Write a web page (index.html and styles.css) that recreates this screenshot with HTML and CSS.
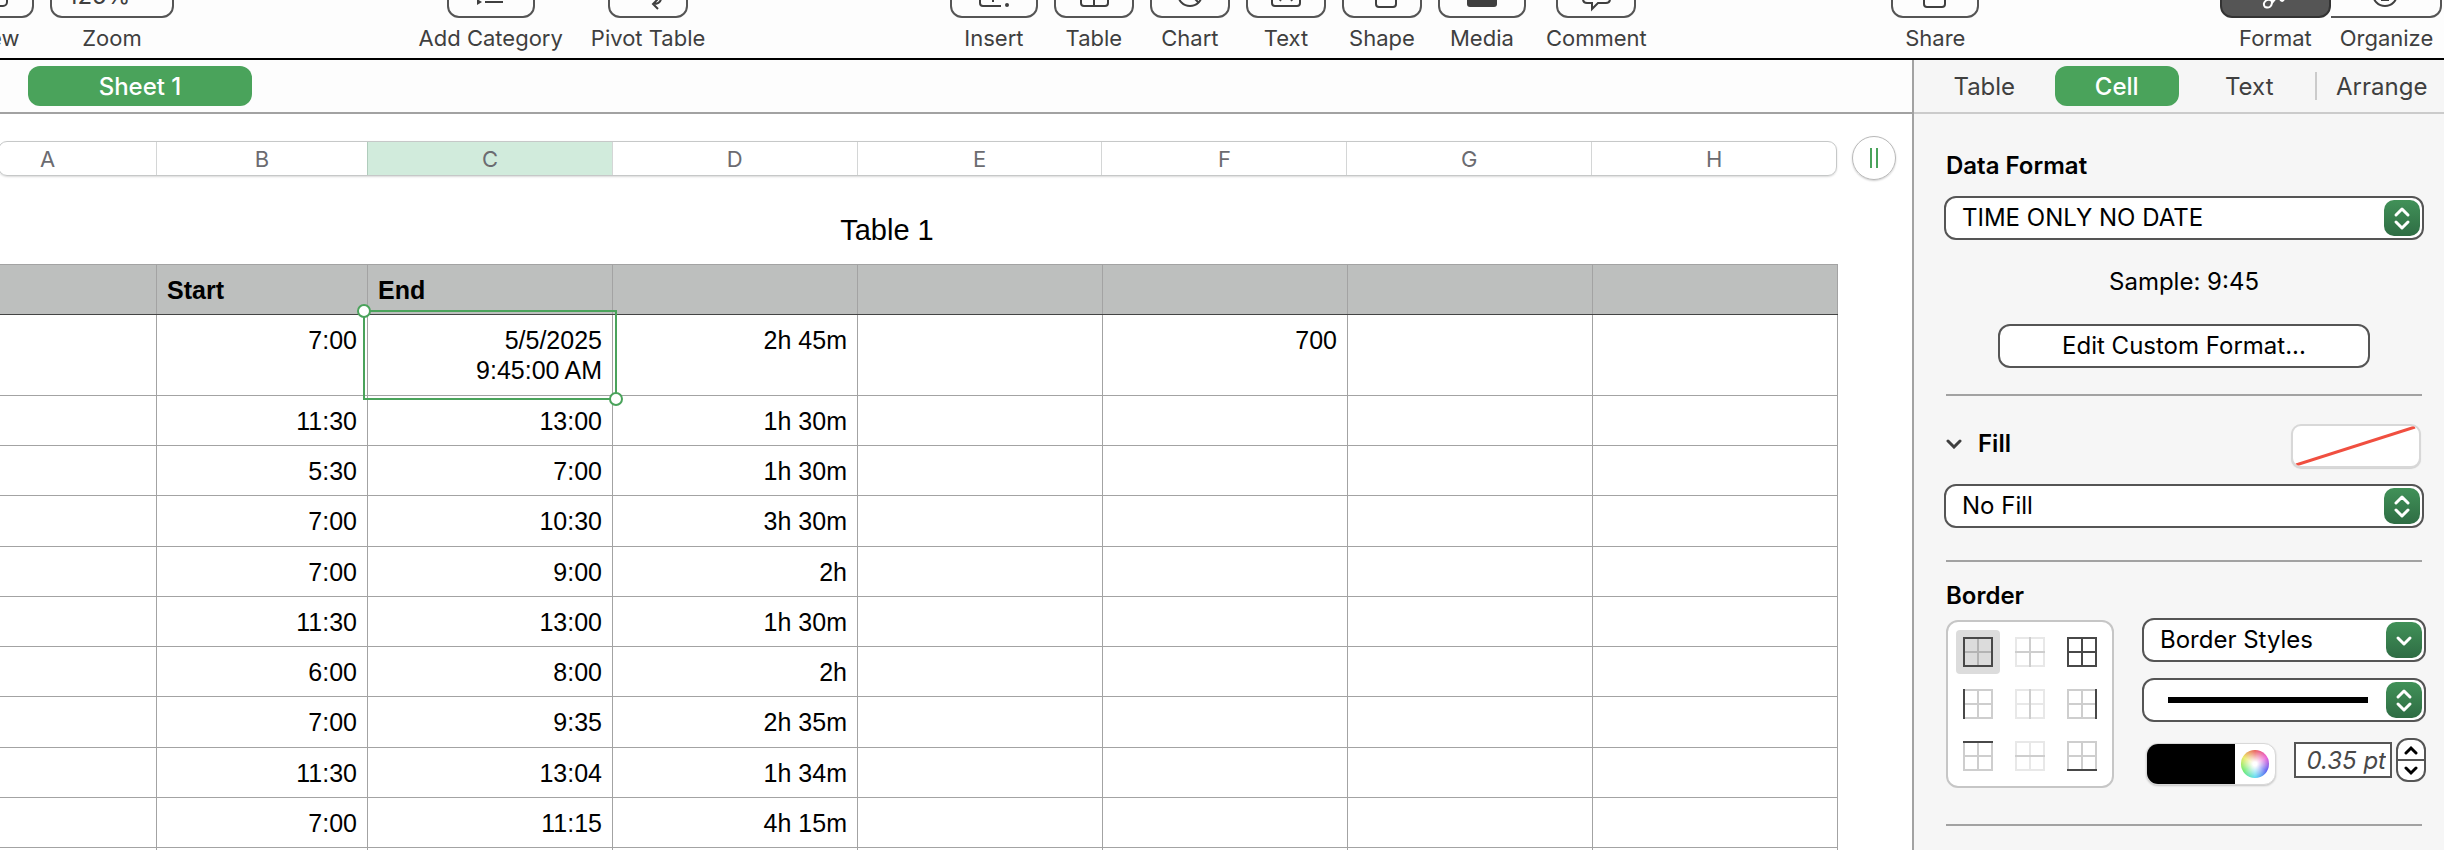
FILE: index.html
```html
<!DOCTYPE html>
<html lang="en">
<head>
    <meta charset="UTF-8">
    <title>Table 1 - Sheet 1</title>
    <link rel="stylesheet" href="styles.css">
</head>
<body>
    <header class="toolbar">
        <div class="tool-group left">
            <button class="tool" type="button">
                <span class="face">
                    <svg viewBox="0 0 40 40"><rect x="3" y="9" width="30" height="21" rx="4"/></svg>
                </span>
                <span class="tool-label">View</span>
            </button>
            <button class="tool" type="button">
                <span class="face zoom-face">125%
                    <svg class="zoom-arrow" viewBox="0 0 14 14"><path d="M2 4l5 5 5-5"/></svg>
                </span>
                <span class="tool-label">Zoom</span>
            </button>
        </div>
        <div class="tool-group wide">
            <button class="tool" type="button">
                <span class="face medium">
                    <svg viewBox="0 0 40 40"><path d="M14 10h18M14 18h18M14 26h18"/><path class="solid" d="M6 23l5 3-5 3z"/></svg>
                </span>
                <span class="tool-label">Add Category</span>
            </button>
            <button class="tool" type="button">
                <span class="face">
                    <svg viewBox="0 0 40 40"><path d="M33 15v8q0 6-8 6M30 24l-5 5 5 5" transform="translate(0 -1)"/><rect x="5" y="4" width="18" height="14" rx="3"/></svg>
                </span>
                <span class="tool-label">Pivot Table</span>
            </button>
        </div>
        <div class="tool-group">
            <button class="tool" type="button">
                <span class="face medium">
                    <svg viewBox="0 0 40 40"><path d="M6 8v19q0 3 3 3h18M19 20v6M33 8v16"/><circle class="solid" cx="33" cy="29" r="2"/></svg>
                </span>
                <span class="tool-label">Insert</span>
            </button>
            <button class="tool" type="button">
                <span class="face">
                    <svg viewBox="0 0 40 40"><rect x="7" y="8" width="27" height="22" rx="3"/><path d="M20 8v22M7 16h27"/></svg>
                </span>
                <span class="tool-label">Table</span>
            </button>
            <button class="tool" type="button">
                <span class="face">
                    <svg viewBox="0 0 40 40"><circle cx="20" cy="18" r="12"/><path d="M20 6v12l9 9"/></svg>
                </span>
                <span class="tool-label">Chart</span>
            </button>
            <button class="tool" type="button">
                <span class="face">
                    <svg viewBox="0 0 40 40"><rect x="6" y="7" width="28" height="23" rx="3"/><path d="M14 25l6-13 6 13"/></svg>
                </span>
                <span class="tool-label">Text</span>
            </button>
            <button class="tool" type="button">
                <span class="face">
                    <svg viewBox="0 0 40 40"><path d="M14 13h20v15q0 3-3 3H17q-3 0-3-3z"/><path d="M14 22q-7-2-7-8t7-8"/></svg>
                </span>
                <span class="tool-label">Shape</span>
            </button>
            <button class="tool" type="button">
                <span class="face medium">
                    <svg viewBox="0 0 40 40"><rect class="solid" x="5" y="8" width="30" height="23" rx="3"/></svg>
                </span>
                <span class="tool-label">Media</span>
            </button>
            <button class="tool" type="button">
                <span class="face">
                    <svg viewBox="0 0 40 40"><path d="M11 6h19q4 0 4 4v13q0 4-4 4h-8l-6 6v-6h-5q-4 0-4-4V10q0-4 4-4z"/></svg>
                </span>
                <span class="tool-label">Comment</span>
            </button>
        </div>
        <div class="tool-group">
            <button class="tool" type="button">
                <span class="face medium">
                    <svg viewBox="0 0 40 40"><path d="M14 12h-2q-3 0-3 3v13q0 3 3 3h15q3 0 3-3V15q0-3-3-3h-2"/></svg>
                </span>
                <span class="tool-label">Share</span>
            </button>
        </div>
        <div class="segmented">
            <button class="tool" type="button" aria-pressed="true">
                <span class="face pressed">
                    <svg viewBox="0 0 40 40"><path d="M10 31q-3-4 2-7 5-1 5 3-1 6-7 4zM17 26l9-12 6-2-2 8q-2 8-5 3l-4-1-4 5"/></svg>
                </span>
                <span class="tool-label">Format</span>
            </button>
            <button class="tool" type="button" aria-pressed="false">
                <span class="face last">
                    <svg viewBox="0 0 40 40"><circle cx="20" cy="18" r="12"/><path d="M13 12h14M14 18h12M16 24h8"/></svg>
                </span>
                <span class="tool-label">Organize</span>
            </button>
        </div>
    </header>

    <div class="workspace">
        <main class="canvas">
            <nav class="sheet-bar">
                <button class="sheet-tab" type="button">Sheet 1</button>
            </nav>

            <div class="column-row">
                <div class="column-bar">
                    <span class="first">A</span>
                    <span>B</span>
                    <span class="active">C</span>
                    <span>D</span>
                    <span>E</span>
                    <span>F</span>
                    <span>G</span>
                    <span>H</span>
                </div>
                <button class="add-column" type="button" aria-label="Add column"></button>
            </div>

            <table class="sheet">
                <caption>Table 1</caption>
                <colgroup>
                    <col class="col-a">
                    <col class="col-b">
                    <col span="6">
                </colgroup>
                <thead>
                    <tr><th></th><th>Start</th><th>End</th><th></th><th></th><th></th><th></th><th></th></tr>
                </thead>
                <tbody>
                    <tr class="tall"><td></td><td>7:00</td><td class="selected">5/5/2025<br>9:45:00&#8239;AM<span class="selection"></span></td><td>2h 45m</td><td></td><td>700</td><td></td><td></td></tr>
                    <tr><td></td><td>11:30</td><td>13:00</td><td>1h 30m</td><td></td><td></td><td></td><td></td></tr>
                    <tr><td></td><td>5:30</td><td>7:00</td><td>1h 30m</td><td></td><td></td><td></td><td></td></tr>
                    <tr><td></td><td>7:00</td><td>10:30</td><td>3h 30m</td><td></td><td></td><td></td><td></td></tr>
                    <tr><td></td><td>7:00</td><td>9:00</td><td>2h</td><td></td><td></td><td></td><td></td></tr>
                    <tr><td></td><td>11:30</td><td>13:00</td><td>1h 30m</td><td></td><td></td><td></td><td></td></tr>
                    <tr><td></td><td>6:00</td><td>8:00</td><td>2h</td><td></td><td></td><td></td><td></td></tr>
                    <tr><td></td><td>7:00</td><td>9:35</td><td>2h 35m</td><td></td><td></td><td></td><td></td></tr>
                    <tr><td></td><td>11:30</td><td>13:04</td><td>1h 34m</td><td></td><td></td><td></td><td></td></tr>
                    <tr><td></td><td>7:00</td><td>11:15</td><td>4h 15m</td><td></td><td></td><td></td><td></td></tr>
                    <tr><td></td><td></td><td></td><td></td><td></td><td></td><td></td><td></td></tr>
                </tbody>
            </table>
        </main>

        <aside class="inspector">
            <nav class="inspector-tabs">
                <button type="button">Table</button>
                <button type="button" class="current">Cell</button>
                <button type="button">Text</button>
                <button type="button" class="divided">Arrange</button>
            </nav>

            <section class="panel">
                <label class="panel-title" for="dataFormat">Data Format</label>
                <div class="popup">
                    <select id="dataFormat"><option>TIME ONLY NO DATE</option></select>
                    <span class="popup-arrow"><svg viewBox="0 0 32 32"><path d="M10 13l6-6 6 6M10 20l6 6 6-6"/></svg></span>
                </div>
                <p class="sample">Sample: 9:45</p>
                <button class="push-button" type="button">Edit Custom Format...</button>
            </section>

            <section class="panel fill-panel">
                <div class="fill-row">
                    <label class="panel-title" for="fillType">
                        <svg class="disclosure" viewBox="0 0 16 10"><path d="M2 2l6 6 6-6"/></svg>
                        Fill
                    </label>
                    <button class="no-fill" type="button" aria-label="Fill color">
                        <svg viewBox="0 0 126 40" preserveAspectRatio="none"><path d="M3 39L122 1"/></svg>
                    </button>
                </div>
                <div class="popup">
                    <select id="fillType"><option>No Fill</option></select>
                    <span class="popup-arrow"><svg viewBox="0 0 32 32"><path d="M10 13l6-6 6 6M10 20l6 6 6-6"/></svg></span>
                </div>
            </section>

            <section class="panel border-panel">
                <h2 class="panel-title">Border</h2>
                <div class="border-row">
                    <div class="border-picker">
                        <button type="button" class="chosen" aria-label="Outside borders">
                            <svg viewBox="0 0 30 30"><path class="inner" d="M15 2v26M2 15h26"/><path class="dark" d="M1 1h28v28H1z"/></svg>
                        </button>
                        <button type="button" aria-label="Inside borders">
                            <svg viewBox="0 0 30 30"><path class="light" d="M1 1h28v28H1z"/><path class="mid" d="M15 0v30M0 15h30"/></svg>
                        </button>
                        <button type="button" aria-label="All borders">
                            <svg viewBox="0 0 30 30"><path class="dark" d="M1 1h28v28H1zM15 0v30M0 15h30"/></svg>
                        </button>
                        <button type="button" aria-label="Left border">
                            <svg viewBox="0 0 30 30"><path class="mid" d="M1 1h28v28H1zM15 0v30M0 15h30"/><path class="dark" d="M1 0v30"/></svg>
                        </button>
                        <button type="button" aria-label="Vertical borders">
                            <svg viewBox="0 0 30 30"><path class="light" d="M1 1h28v28H1zM0 15h30"/><path class="mid" d="M15 0v30"/></svg>
                        </button>
                        <button type="button" aria-label="Right border">
                            <svg viewBox="0 0 30 30"><path class="mid" d="M1 1h28v28H1zM15 0v30M0 15h30"/><path class="dark" d="M29 0v30"/></svg>
                        </button>
                        <button type="button" aria-label="Top border">
                            <svg viewBox="0 0 30 30"><path class="mid" d="M1 1h28v28H1zM15 0v30M0 15h30"/><path class="dark" d="M0 1h30"/></svg>
                        </button>
                        <button type="button" aria-label="Horizontal borders">
                            <svg viewBox="0 0 30 30"><path class="light" d="M1 1h28v28H1zM15 0v30"/><path class="mid" d="M0 15h30"/></svg>
                        </button>
                        <button type="button" aria-label="Bottom border">
                            <svg viewBox="0 0 30 30"><path class="mid" d="M1 1h28v28H1zM15 0v30M0 15h30"/><path class="dark" d="M0 29h30"/></svg>
                        </button>
                    </div>

                    <div class="border-options">
                        <div class="popup">
                            <select aria-label="Border Styles"><option>Border Styles</option></select>
                            <span class="popup-arrow"><svg viewBox="0 0 32 32"><path d="M10 14l6 6 6-6"/></svg></span>
                        </div>
                        <div class="popup">
                            <select class="line-style" aria-label="Line style"><option></option></select>
                            <span class="popup-arrow"><svg viewBox="0 0 32 32"><path d="M10 13l6-6 6 6M10 20l6 6 6-6"/></svg></span>
                        </div>
                        <div class="line-row">
                            <div class="color-well">
                                <button class="well" type="button" aria-label="Line color"></button>
                                <button class="wheel" type="button" aria-label="Show colors"><span></span></button>
                            </div>
                            <input class="line-width" type="text" value="0.35 pt" aria-label="Line width">
                            <div class="stepper">
                                <button type="button" aria-label="Increase"><svg viewBox="0 0 16 10"><path d="M3 8l5-5 5 5"/></svg></button>
                                <button type="button" aria-label="Decrease"><svg viewBox="0 0 16 10"><path d="M3 2l5 5 5-5"/></svg></button>
                            </div>
                        </div>
                    </div>
                </div>
            </section>
        </aside>
    </div>
</body>
</html>
```

FILE: styles.css
```css
*, *::before, *::after { box-sizing: border-box; }

body {
    margin: 0;
    height: 100vh;
    display: flex;
    flex-direction: column;
    overflow: hidden;
    font-family: Inter, "Liberation Sans", sans-serif;
    font-size: 24px;
    line-height: 28px;
    color: #000;
    background: #fff;
}

button, input, select {
    font: inherit;
    color: inherit;
    margin: 0;
    padding: 0;
    border: none;
    background: none;
}

svg {
    fill: none;
    stroke: currentColor;
    stroke-width: 2;
    display: block;
}

/* Toolbar */
.toolbar {
    flex: none;
    height: 60px;
    display: flex;
    justify-content: space-between;
    align-items: flex-end;
    padding: 0 2px 6px 0;
    border-bottom: 2px solid #000;
    background: #fdfdfd;
    color: #3f3f3f;
    overflow: hidden;
}
.tool-group {
    display: flex;
    gap: 16px;
}
.tool-group.left { margin-left: -46px; }
.tool-group.wide { gap: 20px; }
.tool {
    display: flex;
    flex-direction: column;
    align-items: center;
    gap: 6px;
}
.tool-label {
    padding: 0 4px;
    font-size: 22px;
    line-height: 28px;
}
.face {
    width: 80px;
    height: 44px;
    border: 2px solid #555;
    border-radius: 12px;
    display: flex;
    align-items: center;
    justify-content: center;
}
.face svg {
    width: 40px;
    height: 40px;
}
.face.medium { width: 88px; }
.face .solid { fill: currentColor; stroke: none; }
.face.zoom-face {
    width: 124px;
    gap: 12px;
}
.face .zoom-arrow {
    width: 14px;
    height: 14px;
}
.segmented { display: flex; }
.segmented .face { width: 111px; }
.face.pressed {
    background: #555;
    border-color: #333;
    color: #fff;
}
.face.last {
    border-left: none;
    border-radius: 0 12px 12px 0;
}

.workspace {
    flex: 1;
    min-height: 0;
    display: flex;
}

/* Sheet area */
.canvas {
    flex: 1;
    min-width: 0;
    overflow: hidden;
}
.sheet-bar {
    height: 54px;
    padding: 6px 28px;
    border-bottom: 2px solid #a2a2a2;
    background: #fdfdfd;
}
.sheet-tab {
    width: 224px;
    height: 40px;
    padding-top: 2px;
    border-radius: 12px;
    background: #4aa35b;
    color: #fff;
    font-weight: 500;
}
.column-row {
    display: flex;
    align-items: center;
    gap: 15px;
    padding: 22px 16px 0 0;
    margin-left: -2px;
}
.column-bar {
    flex: 1;
    display: grid;
    grid-template-columns: 157px 211px repeat(6, 1fr);
    height: 35px;
    border: 1px solid #c6c8c8;
    border-radius: 9px;
    box-shadow: 0 1px 2px rgba(0, 0, 0, 0.15);
    overflow: hidden;
    color: #6b6b70;
    font-size: 22px;
    line-height: 34px;
    text-align: center;
}
.column-bar span { border-left: 1px solid #d4d6d6; }
.column-bar .first {
    border-left: none;
    padding-right: 60px;
}
.column-bar .active {
    background: #d1ebdc;
    border-color: #b0ccbc;
}
.add-column {
    width: 44px;
    height: 44px;
    border: 1px solid #b8b8b8;
    border-radius: 50%;
    box-shadow: 0 1px 2px rgba(0, 0, 0, 0.2);
    display: flex;
    align-items: center;
    justify-content: center;
}
.add-column::before {
    content: "";
    width: 8px;
    height: 20px;
    border: solid #4aa35b;
    border-width: 0 2px;
}

.sheet {
    width: calc(100% - 10px);
    margin-left: -64px;
    border-collapse: collapse;
    table-layout: fixed;
    font-family: "Liberation Sans", Arial, sans-serif;
    font-size: 25px;
    line-height: 30px;
}
.sheet caption {
    height: 84px;
    padding-top: 32px;
    font-size: 29px;
    line-height: 36px;
}
.col-a { width: 220px; }
.col-b { width: 211px; }
.sheet th, .sheet td {
    height: 50px;
    padding: 10px 10px 0;
    border: 1px solid #a3a3a3;
    vertical-align: top;
}
.sheet th {
    background: #bdbfbe;
    border-bottom-color: #444;
    text-align: left;
}
.sheet td { text-align: right; }
.sheet .tall td { height: 81px; }
.sheet tbody tr:nth-child(4n) td { height: 51px; }
.sheet .selected { position: relative; }
.selection {
    position: absolute;
    inset: -5px;
    border: 2px solid #4aa35b;
}
.selection::before,
.selection::after {
    content: "";
    position: absolute;
    width: 14px;
    height: 14px;
    border: 2px solid #4aa35b;
    border-radius: 50%;
    background: #fff;
}
.selection::before { top: -8px; left: -8px; }
.selection::after { bottom: -8px; right: -8px; }

/* Inspector */
.inspector {
    flex: none;
    width: 532px;
    border-left: 2px solid #a2a2a2;
    background: #f6f6f6;
}
.inspector-tabs {
    height: 54px;
    display: grid;
    grid-template-columns: repeat(4, 1fr);
    gap: 8px;
    padding: 6px 0 6px 8px;
    border-bottom: 2px solid #cbcbcb;
    color: #3f3f3f;
}
.inspector-tabs button {
    padding-top: 2px;
    border-radius: 12px;
}
.inspector-tabs .current {
    background: #4aa35b;
    color: #fff;
    font-weight: 500;
}
.inspector-tabs .divided { position: relative; }
.inspector-tabs .divided::before {
    content: "";
    position: absolute;
    left: -5px;
    top: 6px;
    height: 28px;
    border-left: 2px solid #cbcbcb;
}

.panel {
    display: flex;
    flex-direction: column;
    padding: 38px 20px 0 30px;
}
.panel::after {
    content: "";
    height: 2px;
    margin: 26px 2px 0;
    background: #a2a2a2;
}
.panel-title {
    margin: 0 0 0 2px;
    font-size: 24px;
    font-weight: 600;
}
.popup {
    position: relative;
    height: 44px;
}
.panel-title + .popup { margin-top: 16px; }
.popup select {
    appearance: none;
    width: 100%;
    height: 44px;
    padding: 0 48px 0 16px;
    border: 2px solid #555;
    border-radius: 12px;
    background: #fff;
}
.popup-arrow {
    position: absolute;
    top: 4px;
    right: 4px;
    width: 36px;
    height: 36px;
    padding: 2px;
    border-radius: 10px;
    background: linear-gradient(#419158, #2f6d44);
    color: #fff;
    pointer-events: none;
}
.popup-arrow svg {
    stroke-width: 3;
    stroke-linecap: round;
    stroke-linejoin: round;
}
.sample {
    margin: 28px 0;
    text-align: center;
}
.push-button {
    align-self: center;
    width: 372px;
    height: 44px;
    border: 2px solid #555;
    border-radius: 12px;
    background: #fff;
}

.fill-panel { padding-top: 28px; }
.fill-panel::after { margin-top: 32px; }
.fill-row {
    display: flex;
    align-items: center;
    justify-content: space-between;
    margin: 0 3px 16px 0;
}
.fill-row .panel-title {
    display: flex;
    align-items: center;
    gap: 16px;
    padding-bottom: 4px;
}
.disclosure {
    width: 16px;
    height: 10px;
    color: #3f3f3f;
    stroke-width: 3;
    stroke-linecap: round;
}
.no-fill {
    width: 130px;
    height: 44px;
    border: 2px solid #d8d8d8;
    border-radius: 10px;
    box-shadow: 0 1px 1px rgba(0, 0, 0, 0.15);
    background: #fff;
    overflow: hidden;
}
.no-fill svg {
    width: 100%;
    height: 40px;
    stroke: #f04f40;
    stroke-width: 3;
}

.border-panel { padding-top: 20px; }
.border-panel::after { margin-top: 36px; }
.border-row {
    display: flex;
    align-items: flex-end;
    gap: 28px;
    margin: 8px -2px 0 2px;
}
.border-picker {
    flex: none;
    display: grid;
    grid-template-columns: repeat(3, 44px);
    gap: 8px;
    padding: 8px;
    border: 2px solid #c6c6c6;
    border-radius: 12px;
    background: #fff;
}
.border-picker button {
    height: 44px;
    padding: 7px;
    border-radius: 4px;
}
.border-picker .chosen { background: #dcdcdc; }
.border-picker svg { width: 30px; height: 30px; }
.border-picker .dark { stroke: #484848; }
.border-picker .inner { stroke: #b4b4b4; }
.border-picker .mid { stroke: #cecece; }
.border-picker .light { stroke: #e8e8e8; }

.border-options {
    flex: 1;
    display: flex;
    flex-direction: column;
    gap: 16px;
    height: 170px;
}
.popup .line-style {
    background: linear-gradient(#000, #000) 24px center / calc(100% - 80px) 6px no-repeat #fff;
}
.line-row {
    display: flex;
    align-items: center;
    height: 44px;
    padding-left: 4px;
}
.color-well {
    display: flex;
    width: 130px;
    height: 42px;
    margin-top: 8px;
    border: 1px solid #d8d8d8;
    border-radius: 12px;
    box-shadow: 0 1px 2px rgba(0, 0, 0, 0.2);
    background: #fff;
    overflow: hidden;
}
.well {
    flex: 1;
    background: #000;
}
.wheel {
    width: 40px;
    display: flex;
    align-items: center;
    justify-content: center;
}
.wheel span {
    width: 28px;
    height: 28px;
    border-radius: 50%;
    background:
        radial-gradient(#fff 10%, rgba(255, 255, 255, 0) 75%),
        conic-gradient(#e8504a, #e84fd0, #4a50f0, #4fd8f0, #5fe860, #e8e850, #e8504a);
}
.line-width {
    width: 98px;
    height: 36px;
    margin: 0 4px 0 auto;
    padding: 0 4px;
    border: 2px solid #555;
    background: #fff;
    color: #484848;
    font-style: italic;
    text-align: right;
}
.stepper {
    display: flex;
    flex-direction: column;
    width: 30px;
    height: 44px;
    border: 2px solid #555;
    border-radius: 12px;
    background: #fff;
    overflow: hidden;
}
.stepper button {
    flex: 1;
    display: flex;
    align-items: center;
    justify-content: center;
}
.stepper button + button { border-top: 2px solid #555; }
.stepper svg {
    width: 16px;
    height: 10px;
    stroke-width: 3;
    stroke-linecap: round;
}
```
